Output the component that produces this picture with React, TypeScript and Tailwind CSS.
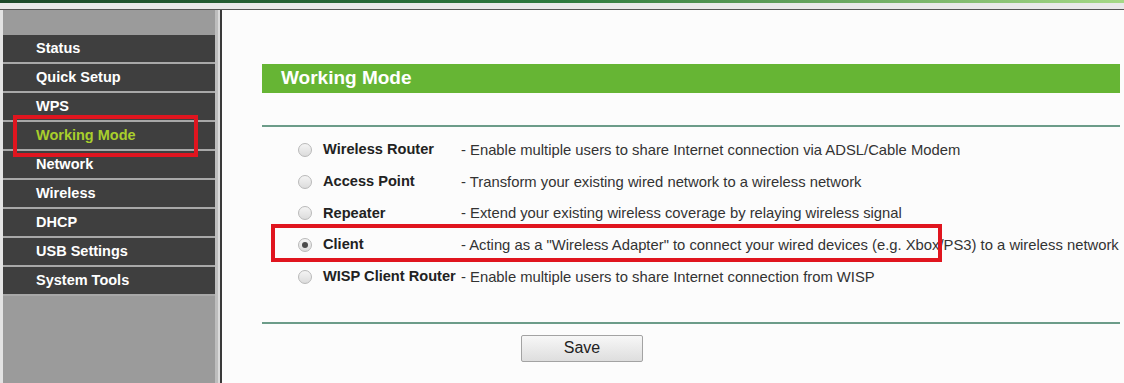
import React from 'react';

const menu = [
  'Status',
  'Quick Setup',
  'WPS',
  'Working Mode',
  'Network',
  'Wireless',
  'DHCP',
  'USB Settings',
  'System Tools',
];

const modes = [
  { label: 'Wireless Router', desc: '- Enable multiple users to share Internet connection via ADSL/Cable Modem' },
  { label: 'Access Point', desc: '- Transform your existing wired network to a wireless network' },
  { label: 'Repeater', desc: '- Extend your existing wireless coverage by relaying wireless signal' },
  { label: 'Client', desc: '- Acting as a "Wireless Adapter" to connect your wired devices (e.g. Xbox/PS3) to a wireless network' },
  { label: 'WISP Client Router', desc: '- Enable multiple users to share Internet connection from WISP' },
];

function Radio({ checked }: { checked?: boolean }) {
  return (
    <span className="flex h-[14px] w-[14px] items-center justify-center rounded-full border border-[#b9b9b9] bg-gradient-to-b from-[#f4f4f4] to-[#dcdcdc]">
      {checked && <span className="h-[6px] w-[6px] rounded-full bg-[#4a4a4a]" />}
    </span>
  );
}

export default function App() {
  return (
    <div className="flex h-[383px] w-[1124px] flex-col overflow-hidden bg-[#fcfcfc] font-['Liberation_Sans',Arial,sans-serif]">
      {/* top strip */}
      <div className="h-[3px] shrink-0 bg-gradient-to-r from-[#1d4a2a] via-[#2d7a3e] to-[#a5d986]" />
      <div className="h-[6px] shrink-0 bg-[#e9e9e9]" />
      <div className="h-[1px] shrink-0 bg-[#555]" />

      <div className="flex min-h-0 flex-1">
        {/* sidebar */}
        <div className="w-[3px] shrink-0 bg-[#e3e3e3]" />
        <div className="relative flex w-[212px] shrink-0 flex-col bg-[#9b9b9b]">
          <div className="h-[25px]" />
          {menu.map((m) => (
            <div key={m} className="flex h-[29px] flex-col">
              <div
                className={`flex h-[27px] items-center bg-[#3f3f3f] pl-[33px] text-[14.5px] font-bold ${
                  m === 'Working Mode' ? 'text-[#a9cf2c]' : 'text-white'
                }`}
              >
                {m}
              </div>
              <div className="h-[2px] bg-[#a8a8a8]" />
            </div>
          ))}
          <div className="absolute left-[10px] top-[105px] h-[42px] w-[185px] border-4 border-[#e0151f]" />
        </div>
        <div className="w-[3px] shrink-0 bg-[#bdbdbd]" />
        <div className="w-[2px] shrink-0 bg-[#dadada]" />
        <div className="w-[2px] shrink-0 bg-[#3a3a3a]" />

        {/* content */}
        <div className="flex min-w-0 flex-1 flex-col pl-[40px] pr-[4px] pt-[54px]">
          <div className="flex h-[29px] items-center bg-[#66b534] pl-[19px] text-[19px] font-bold text-white">
            Working Mode
          </div>
          <div className="mt-[32px] h-[2px] bg-[#6c9c89]" />

          <div className="relative mt-[7px]">
            {modes.map((m, i) => (
              <div key={m.label} className="flex h-[31.8px] items-center">
                <div className="flex w-[61px] shrink-0 justify-end pr-[11px]">
                  <Radio checked={i === 3} />
                </div>
                <div className="w-[138px] shrink-0 whitespace-nowrap text-[14.6px] font-bold text-[#222]">{m.label}</div>
                <div className="whitespace-nowrap text-[14.8px] text-[#333]">{m.desc}</div>
              </div>
            ))}
            <div className="absolute left-[9px] top-[90px] h-[38px] w-[671px] border-4 border-[#e0151f]" />
          </div>

          <div className="mt-[29px] h-[2px] bg-[#6c9c89]" />
          <div className="mt-[11px] flex pl-[259px]">
            <button className="h-[27px] w-[122px] rounded-[2px] border border-[#a3a3a3] bg-gradient-to-b from-[#f7f7f7] to-[#dedede] text-[16px] text-[#222]">
              Save
            </button>
          </div>
        </div>
      </div>
    </div>
  );
}
